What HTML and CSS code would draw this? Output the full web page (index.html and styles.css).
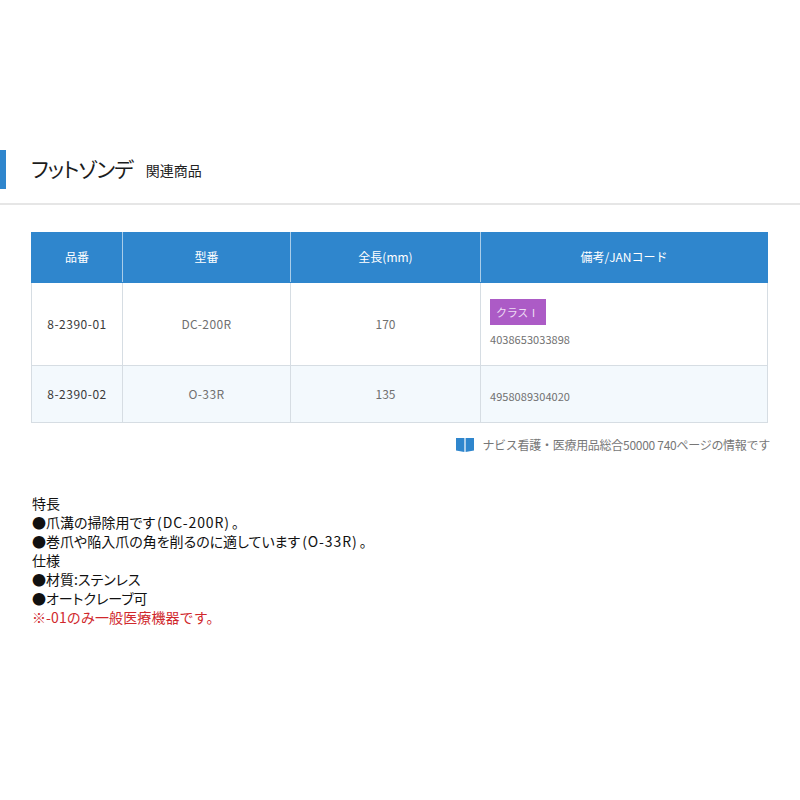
FILE: index.html
```html
<!DOCTYPE html>
<html lang="ja">
<head>
<meta charset="utf-8">
<title>フットゾンデ 関連商品</title>
<link rel="stylesheet" href="styles.css">
</head>
<body>
<header class="head">
  <h1 class="title">フットゾンデ</h1>
  <span class="sub">関連商品</span>
</header>
<main class="main">
  <table class="spec">
    <colgroup><col class="c1"><col class="c2"><col class="c3"><col class="c4"></colgroup>
    <thead>
      <tr class="hrow"><th>品番</th><th>型番</th><th>全長(mm)</th><th>備考/JANコード</th></tr>
    </thead>
    <tbody>
      <tr class="r1">
        <td class="code">8-2390-01</td><td class="model">DC-200R</td><td>170</td>
        <td class="note"><span class="badge">クラスⅠ</span><p class="jan">4038653033898</p></td>
      </tr>
      <tr class="r2">
        <td class="code">8-2390-02</td><td class="model">O-33R</td><td>135</td>
        <td class="note"><p class="jan">4958089304020</p></td>
      </tr>
    </tbody>
  </table>
  <p class="source">
    <svg class="book" viewBox="0 0 18 14" width="18" height="14" aria-hidden="true"><path d="M0 0h8.4v14L0 12.6zM9.6 0H18v12.6L9.6 14z"/></svg>
    <span>ナビス看護・医療用品総合50000 740ページの情報です</span>
  </p>
</main>
<section class="desc">
  <p>特長</p>
  <p>●爪溝の掃除用です<span class="ltn">(DC-200R)</span>。</p>
  <p>●巻爪や陥入爪の角を削るのに適しています<span class="ltn">(O-33R)</span>。</p>
  <p>仕様</p>
  <p>●材質:ステンレス</p>
  <p>●オートクレーブ可</p>
  <p class="warn">※-01のみ一般医療機器です。</p>
</section>
</body>
</html>
```
FILE: styles.css
```css
* { box-sizing: border-box; }
html, body { margin: 0; padding: 0; }
body {
  background: #fff;
  font-family: "Noto Sans CJK JP", "Noto Sans", sans-serif;
  color: #000;
  height: 800px;
  overflow: hidden;
}
.head {
  margin-top: 150px;
  height: 55px;
  display: flex;
  align-items: flex-start;
  padding-left: 31px;
  border-bottom: 2px solid #e6e6e6;
  position: relative;
}
.head::before {
  content: "";
  position: absolute;
  left: 0;
  top: 0;
  width: 6px;
  height: 39px;
  background: #2f86cd;
}
.title {
  margin: 0;
  font-size: 21px;
  font-weight: 400;
  line-height: 36px;
  font-feature-settings: "palt";
  letter-spacing: -1px;
  color: #1c1c1c;
}
.sub {
  margin-left: 13px;
  margin-top: 10px;
  font-size: 14px;
  line-height: 21px;
  color: #222;
}
.main { padding: 27px 30px 0 31px; }
.spec {
  width: 736px;
  border-collapse: collapse;
  table-layout: fixed;
  font-size: 12px;
  color: #707070;
}
.c1 { width: 91px; }
.c2 { width: 168px; }
.c3 { width: 190px; }
.c4 { width: 287px; }
.spec th {
  background: #2f86cd;
  color: #fff;
  font-weight: 400;
  height: 50px;
  padding: 0;
  border-left: 1px solid #a9cde9;
  border-bottom: 1px solid #2f86cd;
}
.spec th:first-child { border-left: 1px solid #2f86cd; }
.spec th:last-child { border-right: 1px solid #2f86cd; }
.spec td {
  text-align: center;
  padding: 0;
  border: 1px solid #d6dde3;
}
.r1 { height: 83px; }
.r2 { height: 57px; background: #f3f9fd; }
.spec .code { color: #3a3a3a; letter-spacing: 0.5px; }
.spec .model { letter-spacing: 0.4px; }
.spec .r1 .note { text-align: left; padding: 16px 9px 0; vertical-align: top; }
.spec .r2 .note { text-align: left; padding: 5px 9px 0; vertical-align: middle; }
.badge {
  display: block;
  width: 56px;
  height: 26px;
  line-height: 27px;
  padding-left: 6px;
  font-size: 11px;
  letter-spacing: -0.3px;
  background: #ac5bc6;
  color: #eddcf3;
  margin-bottom: 5px;
}
.jan { margin: 0; line-height: 18px; font-size: 11px; letter-spacing: 0.05px; }
.source {
  margin: 13px 0 0;
  display: flex;
  justify-content: flex-end;
  align-items: center;
  gap: 8px;
  font-size: 12px;
  line-height: 18px;
  letter-spacing: -0.28px;
  color: #777;
  width: 739px;
}
.book { fill: #2f86cd; }
.desc {
  padding: 0 0 0 32px;
  margin-top: 40px;
  font-size: 14px;
  line-height: 19px;
  color: #111;
  font-feature-settings: "palt";
}
.desc p { margin: 0; }
.desc .ltn { letter-spacing: 0.9px; padding: 0 2px; }
.desc .warn { color: #d0282c; font-feature-settings: normal; letter-spacing: 0.1px; }
```
